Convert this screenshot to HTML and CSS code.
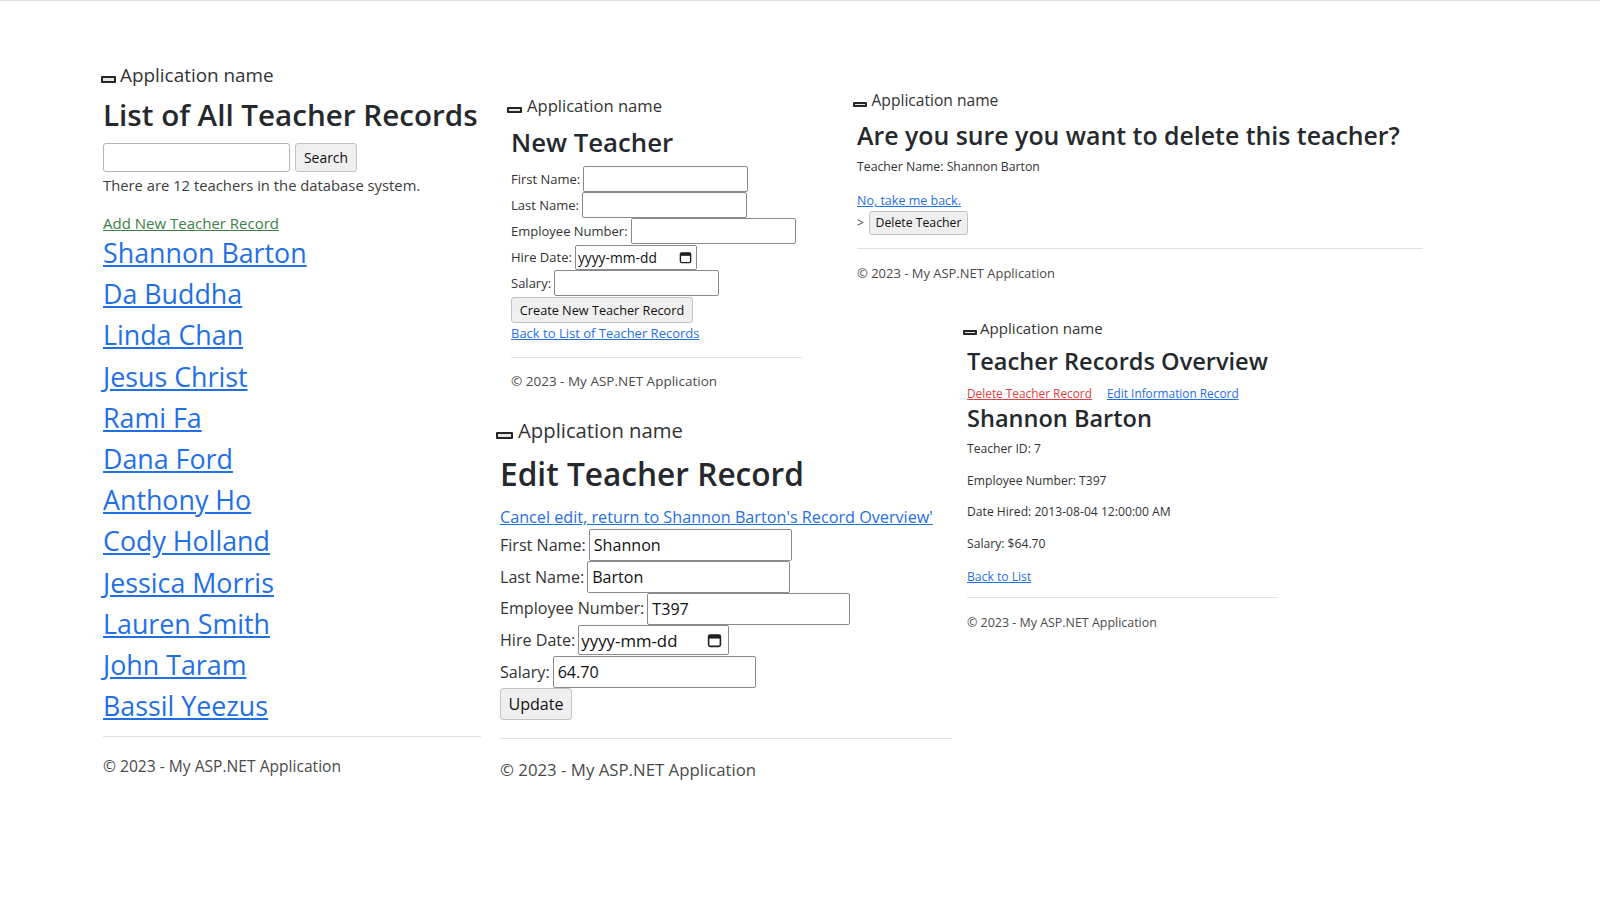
FILE: index.html
```html
<!DOCTYPE html>
<html lang="en">
<head>
<meta charset="utf-8">
<title>Teacher Records</title>
<link rel="stylesheet" href="styles.css">
</head>
<body>
<div class="canvas">

  <section class="win win-list">
    <div class="navbar"><span class="toggler"></span><span class="brand">Application name</span></div>
    <h1 class="title">List of All Teacher Records</h1>
    <form class="search">
      <input class="field search-field" type="text">
      <button class="btn" type="button">Search</button>
    </form>
    <p class="count">There are 12 teachers in the database system.</p>
    <a class="add-link" href="#">Add New Teacher Record</a>
    <ul class="names">
      <li><a href="#">Shannon Barton</a></li>
      <li><a href="#">Da Buddha</a></li>
      <li><a href="#">Linda Chan</a></li>
      <li><a href="#">Jesus Christ</a></li>
      <li><a href="#">Rami Fa</a></li>
      <li><a href="#">Dana Ford</a></li>
      <li><a href="#">Anthony Ho</a></li>
      <li><a href="#">Cody Holland</a></li>
      <li><a href="#">Jessica Morris</a></li>
      <li><a href="#">Lauren Smith</a></li>
      <li><a href="#">John Taram</a></li>
      <li><a href="#">Bassil Yeezus</a></li>
    </ul>
    <hr class="rule">
    <footer class="foot">© 2023 - My ASP.NET Application</footer>
  </section>

  <section class="win win-new">
    <div class="navbar"><span class="toggler"></span><span class="brand">Application name</span></div>
    <h2 class="title">New Teacher</h2>
    <form class="rows">
      <div class="row"><label>First Name:</label><input class="field w-a" type="text"></div>
      <div class="row"><label>Last Name:</label><input class="field w-a" type="text"></div>
      <div class="row"><label>Employee Number:</label><input class="field w-a" type="text"></div>
      <div class="row"><label>Hire Date:</label><span class="field date"><span class="ph">yyyy-mm-dd</span><svg class="cal" viewBox="0 0 14 14"><rect x="1.5" y="2" width="11" height="10.5" rx="1.5" fill="none" stroke="#1f1f1f" stroke-width="1.5"/><rect x="1.5" y="2" width="11" height="3.2" fill="#1f1f1f"/></svg></span></div>
      <div class="row"><label>Salary:</label><input class="field w-a" type="text"></div>
      <button class="btn btn-create" type="button">Create New Teacher Record</button>
    </form>
    <a class="back" href="#">Back to List of Teacher Records</a>
    <hr class="rule">
    <footer class="foot">© 2023 - My ASP.NET Application</footer>
  </section>

  <section class="win win-del">
    <div class="navbar"><span class="toggler"></span><span class="brand">Application name</span></div>
    <h2 class="title">Are you sure you want to delete this teacher?</h2>
    <p class="info">Teacher Name: Shannon Barton</p>
    <a class="back" href="#">No, take me back.</a>
    <form class="del-form"><span class="gt">&gt;</span><button class="btn" type="button">Delete Teacher</button></form>
    <hr class="rule">
    <footer class="foot">© 2023 - My ASP.NET Application</footer>
  </section>

  <section class="win win-show">
    <div class="navbar"><span class="toggler"></span><span class="brand">Application name</span></div>
    <h2 class="title">Teacher Records Overview</h2>
    <div class="actions">
      <a class="danger" href="#">Delete Teacher Record</a>
      <a href="#">Edit Information Record</a>
    </div>
    <h3 class="name">Shannon Barton</h3>
    <p class="fact">Teacher ID: 7</p>
    <p class="fact">Employee Number: T397</p>
    <p class="fact">Date Hired: 2013-08-04 12:00:00 AM</p>
    <p class="fact">Salary: $64.70</p>
    <a class="back" href="#">Back to List</a>
    <hr class="rule">
    <footer class="foot">© 2023 - My ASP.NET Application</footer>
  </section>

  <section class="win win-edit">
    <div class="navbar"><span class="toggler"></span><span class="brand">Application name</span></div>
    <h2 class="title">Edit Teacher Record</h2>
    <a class="back cancel" href="#">Cancel edit, return to Shannon Barton's Record Overview'</a>
    <form class="rows">
      <div class="row"><label>First Name:</label><input class="field w-a" type="text" value="Shannon"></div>
      <div class="row"><label>Last Name:</label><input class="field w-a" type="text" value="Barton"></div>
      <div class="row"><label>Employee Number:</label><input class="field w-a" type="text" value="T397"></div>
      <div class="row"><label>Hire Date:</label><span class="field date"><span class="ph">yyyy-mm-dd</span><svg class="cal" viewBox="0 0 14 14"><rect x="1.5" y="2" width="11" height="10.5" rx="1.5" fill="none" stroke="#1f1f1f" stroke-width="1.5"/><rect x="1.5" y="2" width="11" height="3.2" fill="#1f1f1f"/></svg></span></div>
      <div class="row"><label>Salary:</label><input class="field w-a" type="text" value="64.70"></div>
      <button class="btn btn-update" type="button">Update</button>
    </form>
    <hr class="rule">
    <footer class="foot">© 2023 - My ASP.NET Application</footer>
  </section>

</div>
</body>
</html>
```

FILE: styles.css
```css
* { box-sizing: border-box; }
html, body { margin: 0; padding: 0; }
body {
  background: #fff;
  font-family: "Open Sans", "Noto Sans", sans-serif;
  color: #212529;
}
.canvas {
  position: relative;
  width: 1600px;
  height: 906px;
  overflow: hidden;
  border-top: 1px solid #dedede;
}

/* generic window */
.win { position: absolute; }
.win p, .win h1, .win h2, .win h3, .win ul { margin: 0; padding: 0; }
.win ul { list-style: none; }
.win a { color: #1f6fe5; text-decoration: underline; }
.navbar { white-space: nowrap; color: #333; }
.toggler {
  display: inline-block;
  width: 15px; height: 6px;
  border: 2px solid #262626;
  border-radius: 1px;
  background: #e6e6e6;
  margin-left: -4px;
  margin-right: 5px;
  vertical-align: -1px;
}
.title { font-weight: 600; color: #25292d; white-space: nowrap; }
.rule { border: 0; border-top: 1px solid #e2e2e2; height: 0; margin: 0; }
.foot { color: #4a4a4a; white-space: nowrap; }
.field {
  border: 1px solid #8a8a8a;
  border-radius: 2px;
  background: #fff;
  font: inherit;
  color: #111;
  padding: 0 4px;
  margin: 0;
}
.btn {
  font: inherit;
  color: #111;
  background: #efefef;
  border: 1px solid #c3c3c3;
  border-radius: 3px;
  padding: 0;
  margin: 0;
  white-space: nowrap;
}
.rows { display: flex; flex-direction: column; align-items: flex-start; }
.row { display: flex; align-items: center; gap: 3px; white-space: nowrap; }
.row label { color: #333; }
.date { display: flex; align-items: center; justify-content: space-between; padding: 0 4px 0 2px; }
.date .ph { color: #111; }
.cal { display: block; }

/* ---- list window ---- */
.win-list { left: 103px; top: 63.5px; width: 378px; }
.win-list .navbar { font-size: 18.9px; line-height: 20px; }
.win-list .toggler { margin-left: -2px; margin-right: 4px; width: 15px; height: 7px; }
.win-list .title { font-size: 29.6px; line-height: 40px; margin-top: 10.5px; }
.search { display: flex; gap: 5px; margin-top: 8px; }
.search-field { width: 187px; height: 29px; border-color: #b5b5b5; border-radius: 3px; }
.search .btn { width: 62px; height: 29px; font-size: 13.9px; }
.win-list .count { font-size: 14.8px; line-height: 20px; margin-top: 2.5px; color: #3d3d3d; white-space: nowrap; }
.add-link { display: block; width: max-content; font-size: 15px; line-height: 20px; margin-top: 18.5px; }
.win .add-link { color: #3b8045; }
.names { margin-top: -1px !important; }
.names li { height: 41.2px; line-height: 41.2px; font-size: 26.8px; }
.win-list .rule { margin-top: 10px; }
.win-list .foot { font-size: 15.6px; line-height: 20px; margin-top: 19px; }

/* ---- new teacher window ---- */
.win-new { left: 511px; top: 94.5px; width: 291px; font-size: 13px; }
.win-new .navbar { font-size: 16.6px; line-height: 20px; }
.win-new .toggler { width: 15px; height: 6px; margin-right: 5px; }
.win-new .title { font-size: 25.75px; line-height: 32px; margin-top: 10px; }
.win-new .rows { margin-top: 8.5px; }
.win-new .row { height: 26px; }
.win-new .field { height: 26px; }
.win-new .w-a { width: 165px; }
.win-new .date { width: 122px; height: 25px; font-size: 13.8px; }
.win-new .cal { width: 13px; height: 13px; }
.win-new .btn-create { width: 182px; height: 26px; margin-top: 1px; font-size: 12.7px; }
.win-new .back { display: block; width: max-content; line-height: 20px; }
.win-new .rule { margin-top: 14px; }
.win-new .foot { font-size: 13.5px; line-height: 20px; margin-top: 13px; }

/* ---- delete window ---- */
.win-del { left: 857px; top: 90px; width: 566px; font-size: 12.3px; }
.win-del .navbar { font-size: 15.6px; line-height: 18px; }
.win-del .toggler { width: 14px; height: 5px; margin-right: 4.5px; }
.win-del .title { font-size: 24.87px; line-height: 32px; margin-top: 10px; }
.win-del .info { font-size: 12.28px; line-height: 16px; margin-top: 8px; color: #333; }
.win-del .back { display: block; width: max-content; font-size: 12.5px; line-height: 16px; margin-top: 18px; }
.del-form { display: flex; align-items: center; margin-top: 1.5px; }
.gt { width: 12px; color: #444; }
.win-del .btn { width: 99px; height: 24px; font-size: 12.28px; }
.win-del .rule { margin-top: 13px; }
.win-del .foot { font-size: 12.97px; line-height: 16px; margin-top: 16.5px; }

/* ---- overview window ---- */
.win-show { left: 967px; top: 318px; width: 311px; font-size: 12.15px; }
.win-show .navbar { font-size: 15.1px; line-height: 18px; }
.win-show .toggler { width: 14px; height: 5px; margin-right: 3px; }
.win-show .title { font-size: 23.56px; line-height: 28px; margin-top: 9.5px; }
.actions { display: flex; gap: 15px; font-size: 11.85px; line-height: 16px; margin-top: 10.5px; white-space: nowrap; }
.win .danger { color: #e0403f; }
.win-show .name { font-size: 23.56px; line-height: 26px; font-weight: 600; color: #25292d; margin-top: 4px; white-space: nowrap; }
.win-show .fact { line-height: 16px; margin-top: 15.6px; color: #333; white-space: nowrap; }
.win-show .name + .fact { margin-top: 10px; }
.win-show .back { display: block; width: max-content; line-height: 16px; margin-top: 17px; }
.win-show .rule { margin-top: 12px; }
.win-show .foot { font-size: 12.45px; line-height: 16px; margin-top: 17px; }

/* ---- edit window ---- */
.win-edit { left: 500px; top: 418px; width: 452px; font-size: 16.1px; }
.win-edit .navbar { font-size: 20.3px; line-height: 22px; }
.win-edit .toggler { width: 17px; height: 7px; margin-right: 5px; }
.win-edit .title { font-size: 31.63px; line-height: 40px; margin-top: 13px; }
.win-edit .cancel { display: block; width: max-content; font-size: 16.2px; line-height: 20px; margin-top: 13px; }
.win-edit .rows { margin-top: 2px; }
.win-edit .row { height: 31.8px; }
.win-edit .field { height: 32px; }
.win-edit .w-a { width: 203px; }
.win-edit .date { width: 151px; height: 30px; padding-right: 6px; font-size: 16.8px; }
.win-edit .cal { width: 15px; height: 15px; }
.win-edit .btn-update { width: 72px; height: 32px; }
.win-edit .rule { margin-top: 18px; }
.win-edit .foot { font-size: 16.8px; line-height: 22px; margin-top: 20px; }
```
